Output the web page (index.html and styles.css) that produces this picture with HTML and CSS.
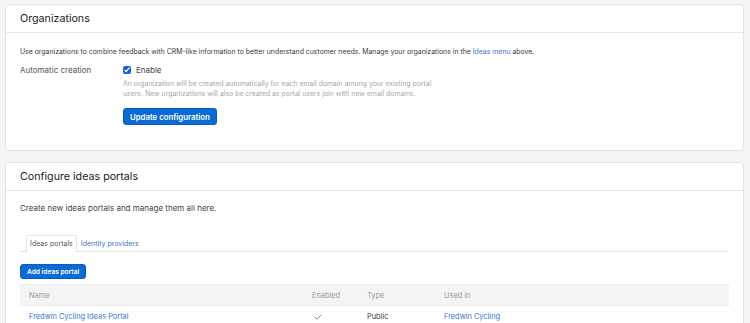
FILE: index.html
```html
<!doctype html>
<html lang="en">
<head>
  <meta charset="utf-8">
  <title>Ideas portals</title>
  <link rel="stylesheet" href="styles.css">
</head>
<body>
  <div class="panel">
    <div class="panel-head">Organizations</div>
    <div class="panel-body org-body">
      <p class="intro">Use organizations to combine feedback with CRM-like information to better understand customer needs. Manage your organizations in the <a href="#">Ideas menu</a> above.</p>
      <div class="field">
        <div class="field-label">Automatic creation</div>
        <div class="field-control">
          <label class="check"><input type="checkbox" checked> Enable</label>
          <div class="help">An organization will be created automatically for each email domain among your existing portal users. New organizations will also be created as portal users join with new email domains.</div>
          <button class="btn">Update configuration</button>
        </div>
      </div>
    </div>
  </div>

  <div class="panel">
    <div class="panel-head">Configure ideas portals</div>
    <div class="panel-body portals-body">
      <p class="lead">Create new ideas portals and manage them all here.</p>
      <div class="tabs">
        <span class="tab active">Ideas portals</span>
        <a class="tab" href="#">Identity providers</a>
      </div>
      <button class="btn btn-sm">Add ideas portal</button>
      <table class="portals">
        <thead>
          <tr><th class="c-name">Name</th><th class="c-enabled">Enabled</th><th class="c-type">Type</th><th>Used in</th></tr>
        </thead>
        <tbody>
          <tr>
            <td><a href="#">Fredwin Cycling Ideas Portal</a></td>
            <td class="tick">
              <svg width="8" height="6" viewBox="0 0 8 6"><path d="M0.8 3 L3 5.2 L7.2 0.9" fill="none" stroke="#666" stroke-width="0.8"/></svg>
            </td>
            <td>Public</td>
            <td><a href="#">Fredwin Cycling</a></td>
          </tr>
        </tbody>
      </table>
    </div>
  </div>
</body>
</html>
```

FILE: styles.css
```css
html, body {
  margin: 0;
  padding: 0;
  background: #f5f5f5;
}
body {
  font-family: Inter, 'Noto Sans', Arial, sans-serif;
  color: #333;
  padding: 4px 6px 0 5px;
}
a {
  color: #3a76d1;
  text-decoration: none;
}
.panel {
  background: #fff;
  border: 1px solid #e2e2e2;
  border-radius: 4px;
  margin-bottom: 11px;
}
.panel-head {
  height: 27px;
  line-height: 27px;
  padding: 0 14px;
  font-size: 10.7px;
  color: #222;
  border-bottom: 1px solid #e6e6e6;
}
.panel-body {
  padding: 11px 14px 0 14px;
}
.org-body {
  padding-top: 14px;
  padding-bottom: 25px;
}
.intro {
  margin: 0 0 7px 0;
  font-size: 6.9px;
  line-height: 10px;
  color: #3d3d3d;
}
.field {
  display: flex;
}
.field-label {
  width: 103px;
  font-size: 8px;
  line-height: 12px;
  color: #555;
}
.check {
  display: flex;
  align-items: center;
  font-size: 8px;
  line-height: 12px;
  color: #444;
}
.check input {
  width: 8px;
  height: 8px;
  margin: 0 5px 0 0;
  accent-color: #1a60d4;
}
.help {
  width: 318px;
  margin-top: 3px;
  font-size: 6.9px;
  line-height: 9.5px;
  color: #a8a8a8;
}
.btn {
  display: block;
  margin-top: 10px;
  background: #0b6ad4;
  color: #fff;
  border: 1px solid #0a5cc0;
  border-radius: 3px;
  font-family: inherit;
  font-size: 7.8px;
  font-weight: 600;
  height: 17px;
  padding: 0 6px;
}
.lead {
  margin: 0 0 21px 0;
  font-size: 8px;
  line-height: 12px;
  color: #444;
}
.tabs {
  display: flex;
  border-bottom: 1px solid #e4e4e4;
  padding-left: 6px;
  height: 16px;
}
.tab {
  font-size: 7px;
  line-height: 16px;
  padding: 0 3px;
  border: 1px solid transparent;
  border-bottom: none;
}
.tab.active {
  color: #555;
  border-color: #e4e4e4;
  background: #fff;
  border-radius: 2px 2px 0 0;
  margin-bottom: -1px;
  height: 16px;
}
.btn-sm {
  margin-top: 12px;
  height: 15px;
  font-size: 6.6px;
  padding: 0 6px;
}
.portals {
  width: 100%;
  border-collapse: collapse;
  margin-top: 5px;
  font-size: 7.4px;
}
.portals th {
  background: #f4f4f4;
  color: #999;
  font-weight: normal;
  text-align: left;
  height: 20px;
  padding: 0 9px;
  border-top: 1px solid #ececec;
  border-bottom: 1px solid #ececec;
}
.portals td {
  height: 21px;
  padding: 0 9px;
  color: #444;
}
.c-name { width: 265px; }
.c-enabled { width: 37px; }
.c-type { width: 59px; }
.tick svg { display: block; margin-left: 2px; }
```
